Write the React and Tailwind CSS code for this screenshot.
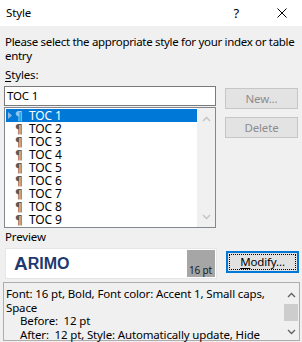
const STYLES = ["TOC 1", "TOC 2", "TOC 3", "TOC 4", "TOC 5", "TOC 6", "TOC 7", "TOC 8", "TOC 9"]

function Chevron({ down, className }) {
  return (
    <svg width="9" height="6" viewBox="0 0 9 6" className={className}>
      <path
        d={down ? "M1 1 L4.5 4.5 L8 1" : "M1 5 L4.5 1.5 L8 5"}
        fill="none"
        stroke="currentColor"
        strokeWidth="1.3"
      />
    </svg>
  )
}

export default function App() {
  return (
    <div className="w-[302px] h-[342px] overflow-hidden bg-[#f0f0f0] text-[11.5px] tracking-[-0.15px] leading-[14px] text-black font-['Noto_Sans',sans-serif]">
      {/* title bar */}
      <div className="h-[26px] bg-white flex items-center">
        <span className="ml-[6px]">Style</span>
        <span className="ml-auto text-[13px]">?</span>
        <svg width="10" height="10" viewBox="0 0 10 10" className="ml-[38px] mr-[15px]">
          <path d="M0.5 0.5 L9.5 9.5 M9.5 0.5 L0.5 9.5" stroke="#000" strokeWidth="1" />
        </svg>
      </div>

      <p className="mt-[9px] ml-[5px] whitespace-nowrap tracking-[-0.32px]">
        Please select the appropriate style for your index or table
        <br />
        entry
      </p>

      <p className="mt-[5px] ml-[5px]">
        <span className="underline underline-offset-2">S</span>tyles:
      </p>

      {/* styles list + buttons */}
      <div className="mt-[4px] flex">
        <div className="ml-[4px] w-[212px]">
          <div className="h-[20px] border border-[#7a7a7a] bg-white flex items-center pl-[2px]">TOC 1</div>

          <div className="mt-[1px] h-[121px] border border-[#828790] bg-white flex">
            <div className="flex-1 pt-[1px] pl-[1px]">
              {STYLES.map((s, i) => (
                <div
                  key={s}
                  className={
                    "h-[13px] leading-[13px] flex items-center " + (i === 0 ? "bg-[#0078d7] text-white" : "")
                  }
                >
                  <span className="w-[9px] pl-[2px] flex items-center">
                    {i === 0 && (
                      <svg width="4" height="7" viewBox="0 0 4 7">
                        <path d="M0 0 L4 3.5 L0 7 Z" fill="#8fb8e3" />
                      </svg>
                    )}
                  </span>
                  <span
                    className={
                      "w-[14px] font-bold text-[12px] leading-[12px] font-['DejaVu_Sans',sans-serif] " +
                      (i === 0 ? "text-[#9fc4ec]" : "text-[#5a5a5a]")
                    }
                  >
                    ¶
                  </span>
                  <span className="text-[12px]">{s}</span>
                </div>
              ))}
            </div>
            <div className="w-[18px] bg-[#f0f0f0] flex flex-col items-center justify-between pt-[8px] pb-[7px] text-[#c2c2c2]">
              <Chevron />
              <Chevron down />
            </div>
          </div>
        </div>

        <div className="ml-[9px] flex flex-col">
          <button className="mt-[2px] w-[73px] h-[21px] border border-[#c6c6c6] bg-[#e3e3e3] text-[#8d8d8d] leading-[14px]">
            New...
          </button>
          <button className="mt-[8px] w-[73px] h-[21px] border border-[#c6c6c6] bg-[#e3e3e3] text-[#8d8d8d] leading-[14px]">
            Delete
          </button>
        </div>
      </div>

      <p className="mt-[2px] ml-[5px]">Preview</p>

      {/* preview + modify */}
      <div className="mt-[4px] flex items-start">
        <div className="ml-[5px] w-[212px] h-[31px] bg-white border border-[#e6e6e6] p-[1px] flex">
          <div className="flex-1 flex items-center pl-[7px] text-[#1f3a6e] font-bold tracking-normal font-['Liberation_Sans',Arial,sans-serif] leading-none">
            <span className="text-[19px]">A</span>
            <span className="text-[16px]">RIMO</span>
          </div>
          <div className="w-[28px] bg-[#a6a6a6] flex items-end justify-end pr-[3px] pb-[1px] text-[10px] leading-[12px] text-[#1a1a1a]">
            16 pt
          </div>
        </div>
        <button className="ml-[9px] mt-[3px] w-[73px] h-[22px] border-2 border-[#0078d7] bg-[#e1e1e1] flex p-[1px]">
          <span className="flex-1 border border-dotted border-black flex items-center justify-center leading-[14px]">
            <span className="underline underline-offset-2">M</span>odify...
          </span>
        </button>
      </div>

      {/* description */}
      <div className="mt-[3px] ml-[3px] w-[297px] h-[59px] border border-[#adadad] bg-[#f0f0f0] flex">
        <div className="flex-1 pl-[2px] pt-[4px] leading-[13.5px] whitespace-pre">
          <div>Font: 16 pt, Bold, Font color: Accent 1, Small caps,</div>
          <div>Space</div>
          <div className="pl-[14px]">Before:  12 pt</div>
          <div className="pl-[14px]">After:  12 pt, Style: Automatically update, Hide</div>
        </div>
        <div className="w-[16px] flex flex-col items-center pt-[9px] text-[#606060]">
          <Chevron />
          <div className="mt-[6px] w-[14px] h-[17px] bg-[#cdcdcd]" />
          <Chevron down className="mt-[8px]" />
        </div>
      </div>
    </div>
  )
}
